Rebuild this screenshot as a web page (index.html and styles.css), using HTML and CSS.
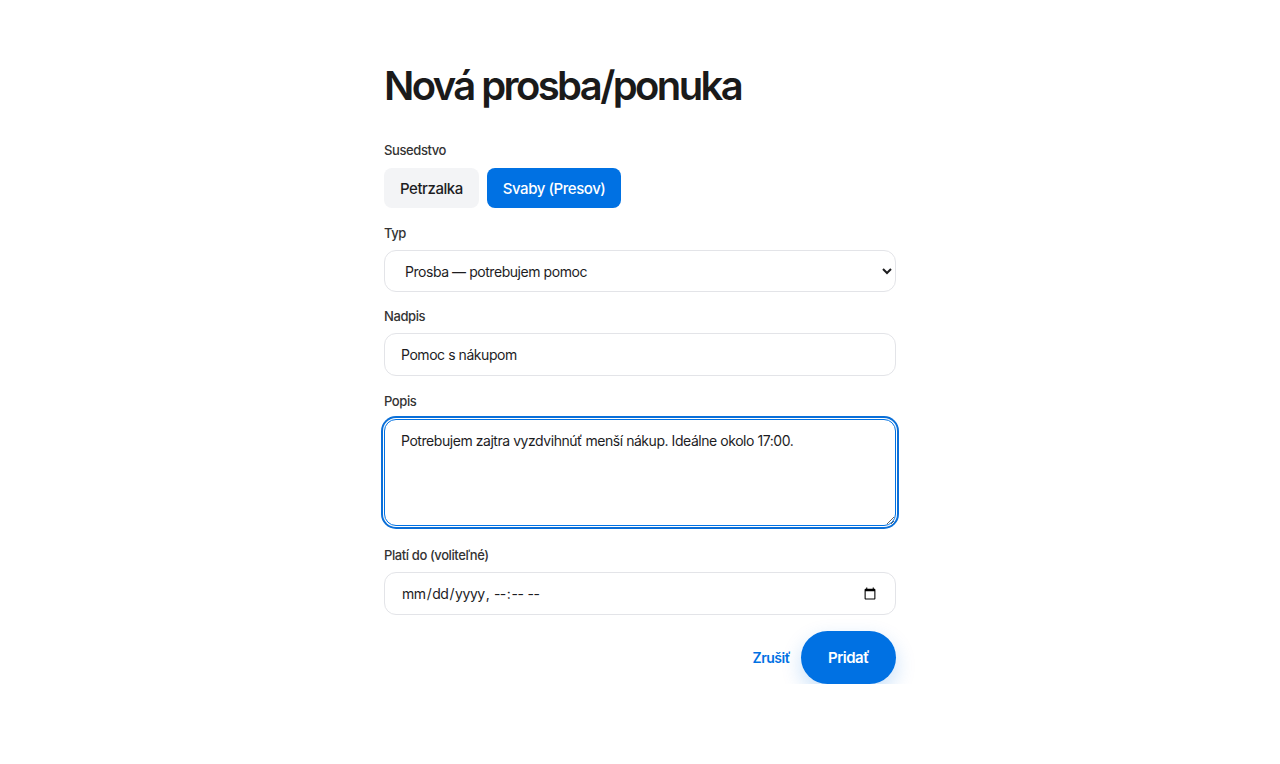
FILE: index.html
```html
<!DOCTYPE html>
<html lang="sk">
<head>
<meta charset="utf-8">
<title>Nová prosba/ponuka</title>
<link rel="stylesheet" href="styles.css">
</head>
<body>
<main class="page">
  <h1 class="title">Nová prosba/ponuka</h1>
  <form class="form">
    <div class="field">
      <div class="label">Susedstvo</div>
      <div class="chips">
        <button type="button" class="chip">Petrzalka</button>
        <button type="button" class="chip chip-active">Svaby (Presov)</button>
      </div>
    </div>
    <div class="field field-select">
      <label class="label" for="typ">Typ</label>
      <select id="typ" class="control select">
        <option>Prosba — potrebujem pomoc</option>
        <option>Ponuka — môžem pomôcť</option>
      </select>
    </div>
    <div class="field">
      <label class="label" for="nadpis">Nadpis</label>
      <input id="nadpis" class="control" type="text" value="Pomoc s nákupom">
    </div>
    <div class="field field-text">
      <label class="label" for="popis">Popis</label>
      <textarea id="popis" class="control textarea focused">Potrebujem zajtra vyzdvihnúť menší nákup. Ideálne okolo 17:00.</textarea>
    </div>
    <div class="field">
      <label class="label" for="plati">Platí do (voliteľné)</label>
      <input id="plati" class="control" type="datetime-local">
    </div>
    <div class="actions">
      <button type="button" class="link-btn">Zrušiť</button>
      <button type="submit" class="primary-btn">Pridať</button>
    </div>
  </form>
</main>
</body>
</html>
```
FILE: styles.css
```css
* { box-sizing: border-box; }
html, body { margin: 0; background: #fff; }
body {
  font-family: Inter, "Noto Sans", "Liberation Sans", sans-serif;
  color: #1d1d1f;
}
.page {
  width: 512px;
  margin: 0 auto;
  padding-top: 63px;
}
.title {
  margin: 0 0 32px;
  font-size: 40px;
  line-height: 46px;
  font-weight: 600;
  letter-spacing: -2.6px;
  color: #1a1a1a;
}
.form { display: flex; flex-direction: column; }
.field {
  display: flex;
  flex-direction: column;
  gap: 8px;
  margin-bottom: 16px;
}
.field-select { margin-bottom: 15px; }
.field-text { margin-bottom: 20px; }
.label {
  font-size: 13px;
  line-height: 18px;
  font-weight: 500;
  color: #333;
  letter-spacing: -0.4px;
}
.chips { display: flex; gap: 8px; margin-top: 1px; }
.chip {
  height: 40px;
  padding: 0 16px;
  border: none;
  border-radius: 8px;
  background: #f3f4f6;
  color: #1d1d1f;
  font-family: inherit;
  font-size: 15px;
  font-weight: 500;
  letter-spacing: -0.45px;
}
.chip-active { background: #0071e3; color: #fff; }
.control {
  display: block;
  width: 100%;
  height: 43px;
  padding: 0 16px;
  border: 1px solid #e3e4e8;
  border-radius: 12px;
  background: #fff;
  color: #1d1d1f;
  font-family: inherit;
  font-size: 14px;
  letter-spacing: -0.45px;
  outline: none;
}
.select { height: 42px; }
.textarea {
  height: 107px;
  padding: 12px 16px;
  line-height: 18px;
  resize: vertical;
  margin-top: 1px;
}
.focused {
  border-color: #0071e3;
  box-shadow: 0 0 0 1px #fff, 0 0 0 3px #0a6fd8;
}
.actions {
  display: flex;
  justify-content: flex-end;
  align-items: center;
  gap: 11px;
}
.link-btn {
  border: none;
  background: none;
  padding: 0;
  color: #0071e3;
  font-family: inherit;
  font-size: 14px;
  font-weight: 600;
  letter-spacing: -0.5px;
}
.primary-btn {
  height: 53px;
  padding: 0 27px;
  border: none;
  border-radius: 27px;
  background: #0071e3;
  color: #fff;
  font-family: inherit;
  font-size: 15px;
  font-weight: 600;
  letter-spacing: -0.5px;
  box-shadow: 0 8px 20px rgba(0, 113, 227, 0.22);
}
```
